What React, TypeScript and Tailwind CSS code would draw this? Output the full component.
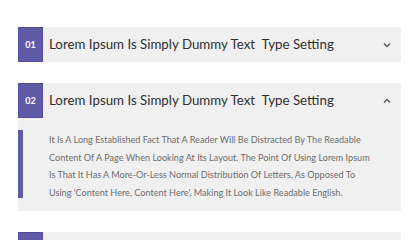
import React, { useState } from "react";

const items = [
  {
    id: "01",
    title: "Lorem Ipsum Is Simply Dummy Text  Type Setting",
    body: "It Is A Long Established Fact That A Reader Will Be Distracted By The Readable Content Of A Page When Looking At Its Layout. The Point Of Using Lorem Ipsum Is That It Has A More-Or-Less Normal Distribution Of Letters, As Opposed To Using 'Content Here, Content Here', Making It Look Like Readable English.",
  },
  {
    id: "02",
    title: "Lorem Ipsum Is Simply Dummy Text  Type Setting",
    body: "It Is A Long Established Fact That A Reader Will Be Distracted By The Readable Content Of A Page When Looking At Its Layout. The Point Of Using Lorem Ipsum Is That It Has A More-Or-Less Normal Distribution Of Letters, As Opposed To Using 'Content Here, Content Here', Making It Look Like Readable English.",
  },
  {
    id: "03",
    title: "Lorem Ipsum Is Simply Dummy Text  Type Setting",
    body: "It Is A Long Established Fact That A Reader Will Be Distracted By The Readable Content Of A Page When Looking At Its Layout.",
  },
];

const Chevron: React.FC<{ up: boolean }> = ({ up }) => (
  <svg width="8" height="6" viewBox="0 0 8 6" className="text-[#555]">
    <path
      d={up ? "M1 4.5 L4 1.5 L7 4.5" : "M1 1.5 L4 4.5 L7 1.5"}
      fill="none"
      stroke="currentColor"
      strokeWidth="1.4"
    />
  </svg>
);

const App: React.FC = () => {
  const [open, setOpen] = useState<string>("02");

  return (
    <div
      className="w-[420px] h-[240px] overflow-hidden bg-white pt-[27px] pl-[18px] pr-[19px] flex flex-col gap-[21px]"
      style={{ fontFamily: "Lato, 'Noto Sans', sans-serif" }}
    >
      {items.map((item) => {
        const isOpen = open === item.id;
        return (
          <div key={item.id} className="bg-[#f0f0f0] shrink-0">
            <button
              className="w-full h-[35px] flex items-center text-left"
              onClick={() => setOpen(isOpen ? "" : item.id)}
            >
              <span className="w-[25px] h-full bg-[#5f5ba9] border border-[#524d9e] flex items-center justify-center text-white text-[9px] font-bold">
                {item.id}
              </span>
              <span className="ml-[6px] flex-1 text-[13.3px] text-[#2f2f2f] whitespace-pre">
                {item.title}
              </span>
              <span className="w-[8px] mr-[10px] flex items-center">
                <Chevron up={isOpen} />
              </span>
            </button>
            {isOpen && (
              <div className="flex items-start pt-[12px] pb-[9px]">
                <div className="w-[5px] h-[68px] bg-[#5f5ba9] shrink-0" />
                <p className="ml-[26px] mr-[25px] mt-[1px] text-[9.1px] leading-[17.7px] text-[#6e6e6e]">
                  {item.body}
                </p>
              </div>
            )}
          </div>
        );
      })}
    </div>
  );
};

export default App;
